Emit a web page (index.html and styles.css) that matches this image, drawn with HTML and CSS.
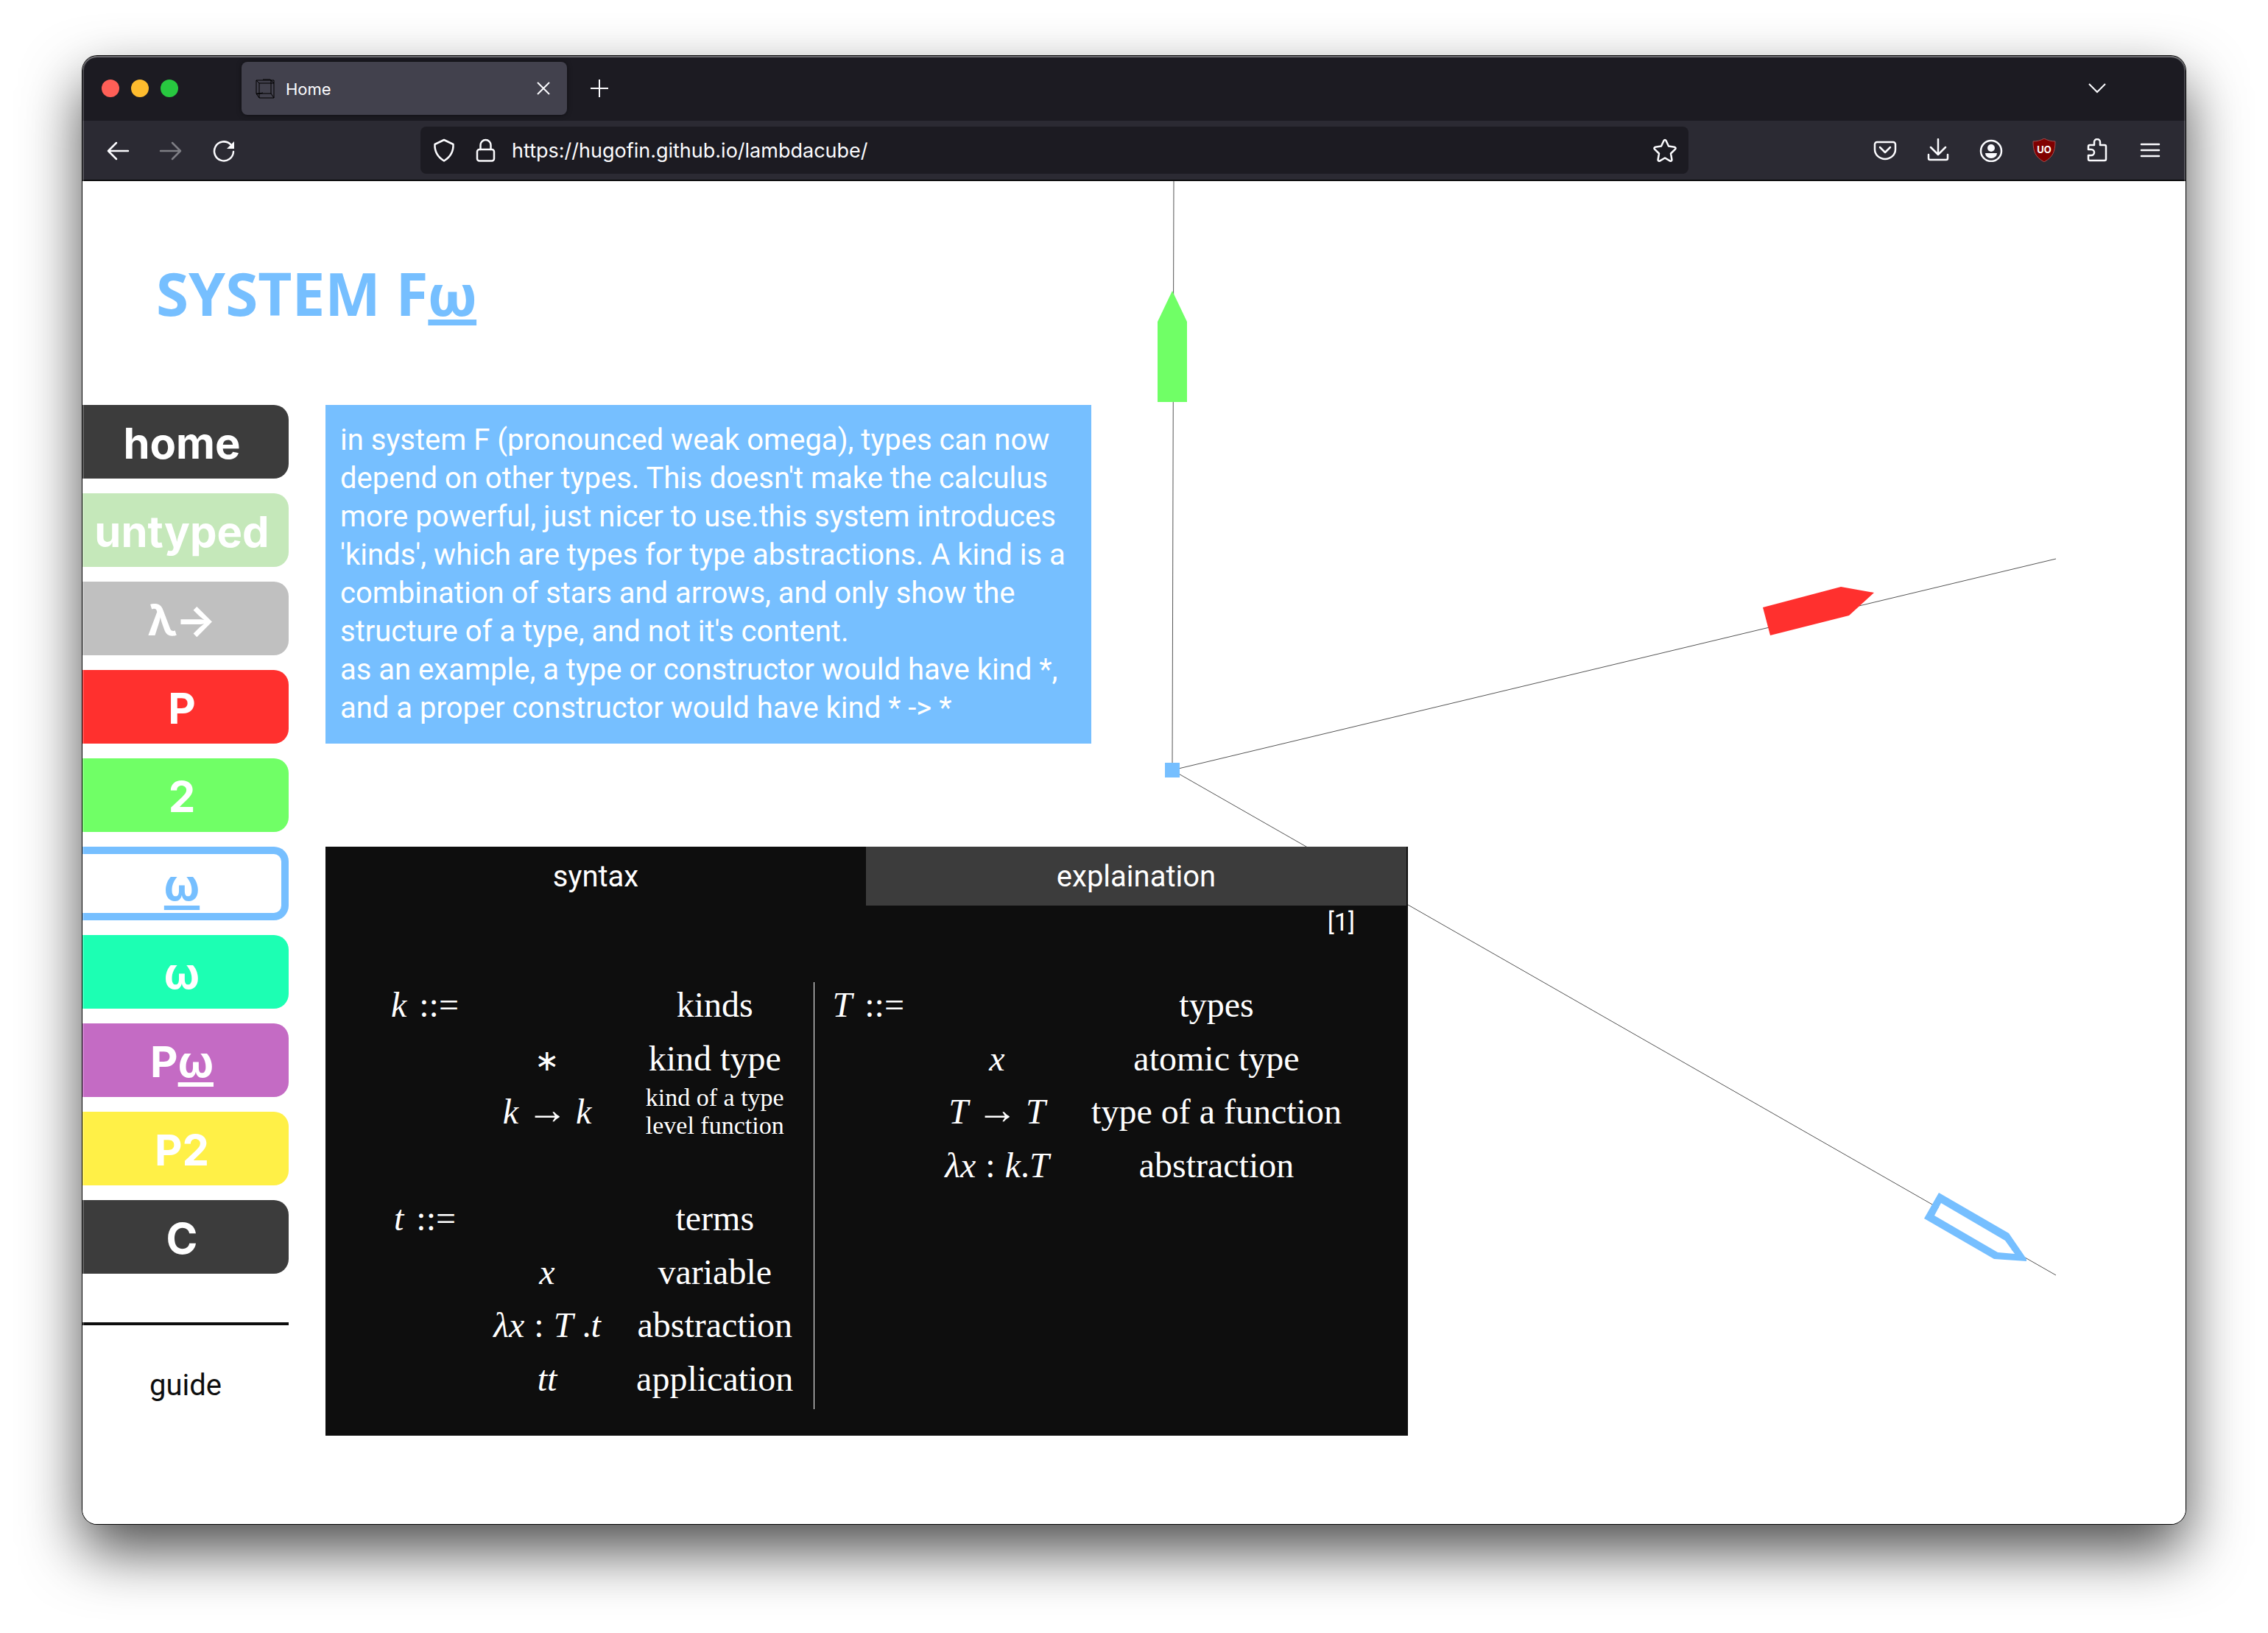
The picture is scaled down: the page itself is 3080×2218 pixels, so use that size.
FILE: index.html
```html
<!DOCTYPE html>
<html lang="en">
<head>
<meta charset="utf-8">
<title>Home</title>
<link rel="stylesheet" href="styles.css">
</head>
<body>
<div class="window">
  <header class="tabbar">
    <div class="lights"><span class="light red"></span><span class="light amber"></span><span class="light green"></span></div>
    <div class="tab">
      <svg class="favicon" viewBox="0 0 28 28"><path d="M2 3h24v24H6L2 21zM2 3l4 4v20M6 7h20M2 21h20l4 6M22 3v18M11 2h10l5 5M2 22l9-2"/></svg>
      <span class="tab-title">Home</span>
      <button class="plain" aria-label="Close tab"><svg class="small-icon" viewBox="0 0 24 24"><path d="M4 4l16 16M20 4L4 20"/></svg></button>
    </div>
    <button class="plain new-tab" aria-label="New tab"><svg class="small-icon" viewBox="0 0 24 24"><path d="M12 0v24M0 12h24"/></svg></button>
    <button class="plain list-tabs" aria-label="List all tabs"><svg class="small-icon" viewBox="0 0 24 24"><path d="M1 6l11 11L23 6"/></svg></button>
  </header>

  <div class="toolbar">
    <button class="tool" aria-label="Back"><svg class="icon" viewBox="0 0 32 32"><path d="M30 17H3M14 6L3 17l11 11"/></svg></button>
    <button class="tool dim" aria-label="Forward"><svg class="icon" viewBox="0 0 32 32"><path d="M2 17h27M18 6l11 11-11 11"/></svg></button>
    <button class="tool" aria-label="Reload"><svg class="icon" viewBox="0 0 32 32"><path d="M29 18a13 13 0 1 1-4-10"/><path class="solid" d="M30 4v10H20z"/></svg></button>
    <div class="urlbar">
      <svg class="icon" viewBox="0 0 32 32"><path d="M16 2l12.500 6C29 18 25 25 16 30.500 7 25 3 18 3.500 8z"/></svg>
      <svg class="icon lock" viewBox="0 0 32 32"><rect x="5" y="15" width="23" height="15.500" rx="3"/><path d="M9.500 15V9a7 7 0 0 1 14 0v6"/></svg>
      <input class="url" type="text" aria-label="Address" value="https://hugofin.github.io/lambdacube/">
      <button class="plain" aria-label="Bookmark this page"><svg class="icon" viewBox="0 0 32 32"><path d="M14.500 3a1.700 1.700 0 0 1 3 0l3.500 7.500 8 1.200c1.500.2 2 2 1 3l-6 5.800 1.400 8.300c.2 1.400-1.200 2.400-2.400 1.800L16 26.500l-7 4.100c-1.200.6-2.600-.4-2.400-1.800L8 20.500l-6-5.800c-1-1-.5-2.800 1-3l8-1.200z"/></svg></button>
    </div>
    <button class="tool" aria-label="Save to Pocket"><svg class="icon" viewBox="0 0 32 32"><path d="M5 5h22a3 3 0 0 1 3 3v7a14 13 0 0 1-28 0V8a3 3 0 0 1 3-3zM9 12l7 7 7-7"/></svg></button>
    <button class="tool" aria-label="Downloads"><svg class="icon" viewBox="0 0 32 32"><path d="M16 1v21M6 12l10 10 10-10M3 22v5a2 2 0 0 0 2 2h22a2 2 0 0 0 2-2v-5"/></svg></button>
    <button class="tool" aria-label="Account"><svg class="icon" viewBox="0 0 32 32"><circle cx="16" cy="17" r="14"/><circle class="solid" cx="16" cy="13" r="5"/><path class="solid" d="M8 20h16a8 7 0 0 1-16 0z"/></svg></button>
    <button class="tool" aria-label="uBlock"><svg class="icon" viewBox="0 0 32 32"><path class="shield" d="M16 0c5 3 10 4 15 4 0 14-3 21-15 28C4 25 1 18 1 4c5 0 10-1 15-4z"/><text class="shield-text" x="16" y="20">UO</text></svg></button>
    <button class="tool" aria-label="Extensions"><svg class="icon" viewBox="0 0 32 32"><path d="M4 15v-4a2 2 0 0 1 2-2h6V5a4 4 0 0 1 8 0v4h6a2 2 0 0 1 2 2v17a2 2 0 0 1-2 2H6a2 2 0 0 1-2-2v-5h4a4 4 0 0 0 0-8z"/></svg></button>
    <button class="tool" aria-label="Menu"><svg class="icon" viewBox="0 0 32 32"><path d="M4 8h24M4 16h24M4 24h24"/></svg></button>
  </div>

  <div class="page">
    <svg class="axes" viewBox="0 0 2856 1824" aria-hidden="true">
      <path class="axis" d="M1482 0L1480 800L2680 513M1480 800L2680 1486"/>
      <rect class="origin" x="1470" y="790" width="20" height="20"/>
      <path class="arrow-green" d="M1480 149l20 42v109h-40V191z"/>
      <path class="arrow-red" d="M2282 579l106-28 45 8-34 31-107 27z"/>
      <path class="arrow-inner" d="M2524 1388l87 51 13 18-23-2-87-49z"/>
      <path class="arrow-blue" fill-rule="evenodd" d="M2521 1374l95 55 24 35v3l-44-3-95-55zM2524 1388l-9 17 86 50 23 2-13-18z"/>
    </svg>

    <h1 class="title">SYSTEM F<u>ω</u></h1>
    <div class="columns">
      <nav class="sidebar">
        <button class="level home">home</button>
        <button class="level untyped">untyped</button>
        <button class="level simple">λ→</button>
        <button class="level p">P</button>
        <button class="level two">2</button>
        <button class="level weak"><u>ω</u></button>
        <button class="level omega">ω</button>
        <button class="level pweak">P<u>ω</u></button>
        <button class="level ptwo">P2</button>
        <button class="level c">C</button>
        <hr class="rule">
        <a class="guide" href="#guide">guide</a>
      </nav>

      <main class="content">
        <p class="intro">in system F (pronounced weak omega), types can now depend on other types. This doesn't make the calculus more powerful, just nicer to use.this system introduces 'kinds', which are types for type abstractions. A kind is a combination of stars and arrows, and only show the structure of a type, and not it's content.<br>as an example, a type or constructor would have kind *, and a proper constructor would have kind * -&gt; *</p>

        <section class="panel">
          <div class="tabs" role="tablist">
            <button class="panel-tab selected" role="tab" aria-selected="true">syntax</button>
            <button class="panel-tab" role="tab" aria-selected="false">explaination</button>
          </div>
          <div class="cite">[1]</div>
          <table class="grammar">
            <colgroup><col class="c1"><col class="c2"><col class="c3"><col class="c4"><col class="c5"><col class="c6"></colgroup>
            <tr><td><i>k</i><span class="def">::=</span></td><td></td><td class="split">kinds</td><td><i>T</i><span class="def">::=</span></td><td></td><td>types</td></tr>
            <tr><td></td><td><span class="star">∗</span></td><td class="split">kind type</td><td></td><td><i>x</i></td><td>atomic type</td></tr>
            <tr><td></td><td><i>k</i><span class="rel to">→</span><i>k</i></td><td class="split"><div class="note">kind of a type<br>level function</div></td><td></td><td><i>T</i><span class="rel to">→</span><i>T</i></td><td>type of a function</td></tr>
            <tr><td></td><td></td><td class="split"></td><td></td><td><i>λx</i><span class="rel">:</span><i>k</i>.<i>T</i></td><td>abstraction</td></tr>
            <tr><td><i>t</i><span class="def">::=</span></td><td></td><td class="split">terms</td><td></td><td></td><td></td></tr>
            <tr><td></td><td><i>x</i></td><td class="split">variable</td><td></td><td></td><td></td></tr>
            <tr><td></td><td><i>λx</i><span class="rel">:</span><i>T</i> .<i>t</i></td><td class="split">abstraction</td><td></td><td></td><td></td></tr>
            <tr><td></td><td><i>tt</i></td><td class="split">application</td><td></td><td></td><td></td></tr>
          </table>
        </section>
      </main>
    </div>
  </div>
</div>
</body>
</html>
```
FILE: styles.css
```css
* { box-sizing: border-box; }

body {
  margin: 0;
  min-height: 100vh;
  padding: 76px 112px 148px;
  display: flex;
  background: #fff;
  font-family: Roboto, sans-serif;
  font-size: 40px;
  line-height: 52px;
  color: #0e0e0e;
}

button {
  border: 0;
  margin: 0;
  padding: 0;
  background: none;
  font: inherit;
  color: inherit;
}

/* browser window */
.window {
  position: relative;
  flex: 1;
  min-width: 0;
  display: flex;
  flex-direction: column;
  border-radius: 20px;
  overflow: hidden;
  box-shadow: 0 0 0 1px #000, 0 36px 80px rgba(0, 0, 0, .7);
}
.window::after {
  content: "";
  position: absolute;
  inset: 0;
  border-radius: 20px;
  box-shadow: inset 0 0 0 2px rgba(255, 255, 255, .2), inset 0 2px 0 rgba(255, 255, 255, .2);
  pointer-events: none;
}

.tabbar {
  height: 88px;
  padding: 0 108px 0 26px;
  display: flex;
  align-items: center;
  background: #1c1b22;
  color: #fbfbfe;
}
.lights { display: flex; gap: 16px; margin-right: 86px; }
.light { width: 24px; height: 24px; border-radius: 50%; }
.red { background: #ff5f57; }
.amber { background: #febc2e; }
.green { background: #28c840; }
.tab {
  width: 442px;
  height: 72px;
  padding: 0 20px 0 18px;
  display: flex;
  align-items: center;
  gap: 14px;
  border-radius: 8px;
  background: #42414d;
  box-shadow: 0 0 6px rgba(0, 0, 0, .5);
}
.tab-title { flex: 1; padding-top: 2px; font-family: Inter, sans-serif; font-size: 22px; }
.favicon { width: 28px; height: 28px; fill: none; stroke: #000; stroke-width: 1; }
.plain { display: flex; }
.new-tab { margin-left: 32px; }
.list-tabs { margin-left: auto; }

.small-icon { width: 24px; height: 24px; fill: none; stroke: #fbfbfe; stroke-width: 2; }
.icon {
  flex: none;
  width: 32px;
  height: 32px;
  fill: none;
  stroke: #fbfbfe;
  stroke-width: 2.5;
  stroke-linecap: round;
  stroke-linejoin: round;
}
.icon .solid { fill: #fbfbfe; stroke: none; }
.icon .shield { fill: #800000; stroke: #a05050; stroke-width: 1; }
.icon .shield-text {
  fill: #fff;
  stroke: none;
  font: 700 13px Inter, sans-serif;
  text-anchor: middle;
}

.toolbar {
  height: 82px;
  padding: 0 16px;
  display: flex;
  align-items: center;
  gap: 8px;
  background: #2b2a33;
  border-bottom: 2px solid #0c0c0d;
}
.tool {
  width: 64px;
  height: 64px;
  display: flex;
  align-items: center;
  justify-content: center;
}
.dim { opacity: .4; }
.urlbar {
  flex: 1;
  height: 64px;
  margin: 0 227px;
  padding: 0 16px;
  display: flex;
  align-items: center;
  border-radius: 8px;
  background: #1c1b22;
}
.lock { margin: 0 20px 0 24px; }
.url {
  flex: 1;
  min-width: 0;
  padding: 0;
  border: 0;
  outline: 0;
  background: none;
  font-family: Inter, sans-serif;
  font-size: 27px;
  color: #fbfbfe;
}

/* page */
.page {
  position: relative;
  flex: 1;
  padding-top: 100px;
  background: #fff;
}
.axes { position: absolute; top: 0; left: 0; width: 100%; }
.axis { fill: none; stroke: #555; stroke-width: 1; }
.origin, .arrow-blue { fill: #76bfff; }
.arrow-green { fill: #70ff66; }
.arrow-red { fill: #ff302e; }
.arrow-inner { fill: #fff; }

.title {
  position: relative;
  margin: 0 0 100px 100px;
  font-family: "Noto Sans", sans-serif;
  font-size: 80px;
  line-height: 104px;
  font-weight: 700;
  color: #76bfff;
}
u { text-decoration-skip-ink: none; text-decoration-thickness: 6px; text-underline-offset: 7px; }
.title u {
  font-family: Roboto, sans-serif;
  line-height: 80px;
  text-decoration-thickness: 8px;
  text-underline-offset: 5px;
}

.columns { position: relative; display: flex; gap: 50px; }
.sidebar { width: 280px; display: flex; flex-direction: column; }
.level {
  height: 100px;
  margin-bottom: 20px;
  padding: 3px 10px 0 0;
  border-radius: 0 20px 20px 0;
  font-family: Inter, sans-serif;
  font-size: 58px;
  font-weight: 700;
  color: #fff;
}
.home, .c { background: #3c3c3c; }
.untyped { background: #c5e8ba; }
.simple { background: #c0c0c0; }
.p { background: #ff302e; }
.two { background: #70ff66; }
.weak {
  padding: 3px 0 0;
  border: solid #76bfff;
  border-width: 10px 10px 10px 0;
  background: #fff;
  color: #76bfff;
}
.omega { background: #1cffb3; }
.pweak { background: #c46bc4; }
.ptwo { background: #fff047; }
.rule { width: 100%; height: 4px; margin: 46px 0 56px; border: 0; background: #0e0e0e; }
.guide { text-align: center; color: #0e0e0e; text-decoration: none; }

.content { flex: 1; min-width: 0; }
.intro {
  max-width: 1040px;
  margin: 0 0 140px;
  padding: 22px 20px;
  background: #76bfff;
  color: #fff;
}

.panel { max-width: 1470px; padding-bottom: 36px; background: #0e0e0e; color: #fff; }
.tabs { display: flex; padding-right: 2px; }
.panel-tab { flex: 1; height: 80px; padding-top: 2px; background: #3c3c3c; }
.panel-tab.selected { background: #0e0e0e; }
.cite { padding-right: 72px; text-align: right; font-size: 34px; line-height: 44px; }

.grammar {
  width: 1344px;
  height: 580px;
  margin: 60px auto 0;
  table-layout: fixed;
  border-collapse: collapse;
  font-family: "Liberation Serif", serif;
  font-size: 48px;
  text-align: center;
}
.grammar td { padding: 0 0 10px; white-space: nowrap; }
.grammar .split { border-right: 1px solid #fff; }
.c1 { width: 144px; }
.c2 { width: 188px; }
.c3 { width: 268px; }
.c4 { width: 148px; }
.c5 { width: 202px; }
.c6 { width: 394px; }
.def { margin-left: 17px; }
.rel { margin: 0 13px; }
.to { margin: 0 11px; font-size: 56px; line-height: 1px; }
.star { font-size: 40px; line-height: 1px; }
.note { margin: -12px 0; font-size: 34px; line-height: 38px; }
```
